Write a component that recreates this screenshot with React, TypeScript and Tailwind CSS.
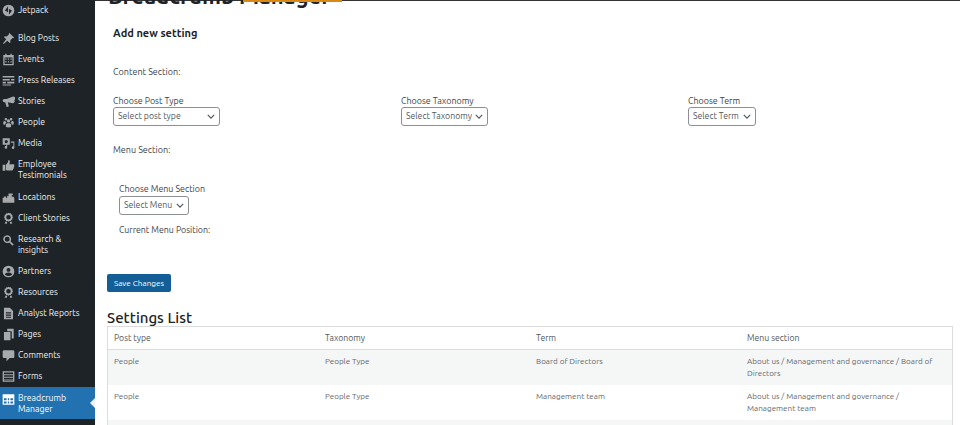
import type { ReactNode } from "react";

const FONT = "font-['Ubuntu','Noto_Sans','Open_Sans',sans-serif]";

function Ico({ children }: { children: ReactNode }) {
  return (
    <svg viewBox="0 0 20 20" className="h-[13px] w-[13px] shrink-0 fill-current">
      {children}
    </svg>
  );
}

const awardPath = (
  <path
    fillRule="evenodd"
    d="M10 1l1.600 1.100 1.900-.2.800 1.700 1.700.9-.2 1.900L17 8l-1.200 1.500.2 1.900-1.700.9-.8 1.700-1.900-.2L10 15l-1.600-1.100-1.900.2-.8-1.700-1.700-.9.2-1.900L3 8l1.200-1.500-.2-1.900 1.700-.9.8-1.700 1.900.2L10 1Zm0 3.500a3.500 3.500 0 1 0 0 7 3.500 3.500 0 0 0 0-7ZM5.500 14.500l2.500.8L7 19l-1.300-1.500-1.700.5 1.500-3.500Zm9 0L16 18l-1.700-.5L13 19l-1-3.700 2.500-.8Z"
  />
);

const icons: Record<string, ReactNode> = {
  jetpack: (
    <path
      fillRule="evenodd"
      d="M10 1a9 9 0 1 0 0 18 9 9 0 0 0 0-18ZM9.300 3.500v9L4.600 10l4.700-6.500Zm1.400 13v-9l4.700 2.500-4.700 6.500Z"
    />
  ),
  pin: <path d="M11.500 1.500 18.500 8.500l-1.200 1.200-1-.5-3.600 3.600.4 3-1.300 1.300-3.500-3.500L2.500 18.500l-1-1 4.900-6.300-3.400-3.400L4.300 6.500l3 .4 3.600-3.600-.5-1 1.100-.8Z" />,
  calendar: (
    <path
      fillRule="evenodd"
      d="M5 1h2v2h6V1h2v2h3v16H2V3h3V1ZM4 7v10h12V7H4Zm1 1.500h2v2H5v-2Zm4 0h2v2H9v-2Zm4 0h2v2h-2v-2Zm-8 4h2v2H5v-2Zm4 0h2v2H9v-2Zm4 0h2v2h-2v-2Z"
    />
  ),
  press: <path d="M1 3h18v2.500H1V3Zm0 4.500h11V10H1V7.500Zm13 0h5V10h-5V7.500ZM1 12h5v2.500H1V12Zm7 0h11v2.500H8V12Zm-7 4h13v1.500H1V16Z" />,
  megaphone: <path d="M17 2.500a3 3 0 0 1 2 5.500 3 3 0 0 1-3 4.500L9 11l1.500 6.500-3.500 1L5 11H3.500a2.500 2.500 0 0 1 0-5H7l9-3.500h1Z" />,
  people: (
    <path d="M6 3a2 2 0 1 1 0 4 2 2 0 0 1 0-4Zm8 0a2 2 0 1 1 0 4 2 2 0 0 1 0-4Zm-4 2a2.500 2.500 0 1 1 0 5 2.500 2.500 0 0 1 0-5ZM2 9c0-1 1.500-1.500 3-1.500.3 1.200 1 2.200 2 3-1.200.6-2 1.500-2 3l-3-.5V9Zm16 0v4l-3 .5c0-1.500-.8-2.400-2-3 1-.8 1.700-1.800 2-3 1.500 0 3 .5 3 1.500ZM6 13.500c0-1.500 1.500-2.500 4-2.500s4 1 4 2.500V17c-2.500 1-5.500 1-8 0v-3.500Z" />
  ),
  media: (
    <path
      fillRule="evenodd"
      d="M1 2h11v10H8v4a2 2 0 1 1-1.500-2V12H1V2Zm5.500 2.500a2.500 2.500 0 1 0 0 5 2.500 2.500 0 0 0 0-5ZM13.500 7H19v9.500a2 2 0 1 1-1.500-2V9h-4V7Z"
    />
  ),
  thumb: <path d="M1 9h4v9H1V9Zm5 0 3-3.500L10 1.500c1.500 0 2.500 1.200 2 3.500l-.7 3H18c1.200 0 1.500 1.500.5 2.500.8.800.5 2-.5 2.500.5 1 0 2-1 2.500.3 1-.3 2-1.500 2H9c-1.500 0-3-.5-3-1.500V9Z" />,
  location: <path d="M1 10.500h2V8.500h3v2h2V7l2 1.500V4h5.500c1 0 1.500 1 1 2L15 6.500V9h3l1 2v7H1v-7.500Z" />,
  award: awardPath,
  search: (
    <path
      fillRule="evenodd"
      d="M8 2a6 6 0 0 1 5 9.300l5 5L16.300 18l-5-5A6 6 0 1 1 8 2Zm0 2.200a3.800 3.800 0 1 0 0 7.600 3.800 3.800 0 0 0 0-7.600Z"
    />
  ),
  partner: (
    <path
      fillRule="evenodd"
      d="M10 1a9 9 0 1 1 0 18 9 9 0 0 1 0-18Zm0 3.500a3 3 0 1 0 0 6 3 3 0 0 0 0-6ZM4.500 14.500c1.300 1.500 3.300 2.300 5.500 2.300s4.200-.8 5.500-2.300c-.5-1.800-2.500-3-5.500-3s-5 1.200-5.500 3Z"
    />
  ),
  analyst: (
    <path
      fillRule="evenodd"
      d="M3 1h9l5 5v13H3V1Zm3 7v2h8V8H6Zm0 3.500v2h8v-2H6Zm0 3.500v1.500h8V15H6Z"
    />
  ),
  pages: <path d="M8 1h10v15h-3V5H8V1ZM3 6h10v13H3V6Z" />,
  comment: <path d="M3 2h14c1 0 2 1 2 2v8c0 1-1 2-2 2h-5l-5 5v-5H3c-1 0-2-1-2-2V4c0-1 1-2 2-2Z" />,
  forms: (
    <path
      fillRule="evenodd"
      d="M1 2h18v16H1V2Zm2 2v2.500h14V4H3Zm0 4v2.500h14V8H3Zm0 4v2.500h14V12H3Zm0 3.800v.7h14v-.7H3Z"
    />
  ),
  table: (
    <path
      fillRule="evenodd"
      d="M1 2h18v16H1V2Zm2 6v3h4V8H3Zm6 0v3h2V8H9Zm4 0v3h4V8h-4Zm-10 5v3h4v-3H3Zm6 0v3h2v-3H9Zm4 0v3h4v-3h-4Z"
    />
  ),
};

type MenuEntry = { label: string; icon: string; tall?: string };

const menu: MenuEntry[] = [
  { label: "Blog Posts", icon: "pin" },
  { label: "Events", icon: "calendar" },
  { label: "Press Releases", icon: "press" },
  { label: "Stories", icon: "megaphone" },
  { label: "People", icon: "people" },
  { label: "Media", icon: "media" },
  { label: "Employee Testimonials", icon: "thumb", tall: "h-[33px]" },
  { label: "Locations", icon: "location" },
  { label: "Client Stories", icon: "award" },
  { label: "Research & insights", icon: "search", tall: "h-[32px]" },
  { label: "Partners", icon: "partner" },
  { label: "Resources", icon: "award" },
  { label: "Analyst Reports", icon: "analyst" },
  { label: "Pages", icon: "pages" },
  { label: "Comments", icon: "comment" },
  { label: "Forms", icon: "forms" },
];

function MenuItem({ entry }: { entry: MenuEntry }) {
  return (
    <div
      className={
        entry.tall
          ? `flex gap-[3px] pl-[2px] pt-[5px] text-[#f0f0f1] ${entry.tall}`
          : "flex h-[21px] items-center gap-[3px] pl-[2px] text-[#f0f0f1]"
      }
    >
      <span className="text-[#a7aaad]">
        <Ico>{icons[entry.icon]}</Ico>
      </span>
      <span className="w-[70px] text-[8.7px] leading-[11px]">{entry.label}</span>
    </div>
  );
}

function Sidebar() {
  return (
    <aside className="flex h-[425px] w-[95px] shrink-0 flex-col overflow-hidden bg-[#1d2327]">
      <div className="flex h-[21px] items-center gap-[3px] pl-[2px] text-[#f0f0f1]">
        <span className="text-[#a7aaad]">
          <Ico>{icons.jetpack}</Ico>
        </span>
        <span className="text-[8.7px]">Jetpack</span>
      </div>
      <div className="h-[7px]" />
      {menu.map((entry) => (
        <MenuItem key={entry.label} entry={entry} />
      ))}
      <div className="relative flex h-[32px] gap-[3px] bg-[#2271b1] pl-[2px] pt-[6px] text-white">
        <Ico>{icons.table}</Ico>
        <span className="w-[70px] text-[8.7px] leading-[11px]">Breadcrumb Manager</span>
        <span className="absolute right-0 top-[11px] h-0 w-0 border-y-[5px] border-r-[5px] border-y-transparent border-r-[#f0f0f1]" />
      </div>
    </aside>
  );
}

function Field({ label, placeholder, width, boxClass }: { label: string; placeholder: string; width: string; boxClass?: string }) {
  return (
    <div className="flex flex-col">
      <span className="text-[8.9px] leading-[12px] text-[#3c434a]">{label}</span>
      <div className={`flex h-[19px] items-center justify-between rounded-[3px] border border-[#8c8f94] bg-white pl-[4px] pr-[4px] text-[8.7px] text-[#50575e] ${width} ${boxClass ?? ""}`}>
        <span className="whitespace-nowrap">{placeholder}</span>
        <svg viewBox="0 0 10 6" className="h-[5px] w-[8px] shrink-0 fill-none stroke-[#50575e] stroke-[1.500]">
          <path d="M1 1l4 4 4-4" />
        </svg>
      </div>
    </div>
  );
}

const rows = [
  { postType: "People", taxonomy: "People Type", term: "Board of Directors", menu: "About us / Management and governance / Board of Directors", bg: "bg-[#f5f6f6]" },
  { postType: "People", taxonomy: "People Type", term: "Management team", menu: "About us / Management and governance / Management team", bg: "bg-white" },
];

function Cell({ children }: { children: ReactNode }) {
  return <div className="px-[6px]">{children}</div>;
}

function SettingsTable() {
  return (
    <div className="w-[846px] border-x border-t border-[#dcdcde]">
      <div className="grid h-[23px] grid-cols-[211px_211px_211px_1fr] items-center border-b border-[#dcdcde] text-[8.700px] leading-[12px] text-[#50575e]">
        <Cell>Post type</Cell>
        <Cell>Taxonomy</Cell>
        <Cell>Term</Cell>
        <Cell>Menu section</Cell>
      </div>
      {rows.map((row) => (
        <div key={row.term} className={`grid h-[35px] grid-cols-[211px_211px_211px_1fr] pt-[5px] text-[8.100px] leading-[12px] text-[#646970] ${row.bg}`}>
          <Cell>{row.postType}</Cell>
          <Cell>{row.taxonomy}</Cell>
          <Cell>{row.term}</Cell>
          <Cell>{row.menu}</Cell>
        </div>
      ))}
      <div className="h-[5px] bg-[#f5f6f6]" />
    </div>
  );
}

export default function App() {
  return (
    <div className={`flex h-[425px] w-[960px] overflow-hidden bg-white ${FONT}`}>
      <Sidebar />
      <main className="relative min-w-0 flex-1 overflow-hidden">
        <div className="absolute left-[148px] top-0 h-[2px] w-[99px] bg-[#d98a14]" />
        <div className="h-[1px] w-full bg-[#333]" />
        <h1 className="-mt-[20px] h-[26px] pl-[13px] text-[22px] font-semibold leading-[30px] text-[#1d2327]">Breadcrumb Manager</h1>
        <div className="h-[19px]" />
        <div className="pl-[18px]">
          <h2 className="text-[11px] font-bold leading-[14px] text-[#1d2327]">Add new setting</h2>
          <p className="mt-[26px] text-[9px] leading-[12px] text-[#3c434a]">Content Section:</p>
          <div className="mt-[17px] grid grid-cols-[288px_287px_1fr]">
            <Field label="Choose Post Type" placeholder="Select post type" width="w-[107px]" />
            <Field label="Choose Taxonomy" placeholder="Select Taxonomy" width="w-[87px]" />
            <Field label="Choose Term" placeholder="Select Term" width="w-[68px]" />
          </div>
          <p className="mt-[18px] text-[9px] leading-[12px] text-[#3c434a]">Menu Section:</p>
          <div className="mt-[27px] pl-[6px]">
            <Field label="Choose Menu Section" placeholder="Select Menu" width="w-[70px]" boxClass="mt-[1px]" />
            <p className="mt-[9px] text-[8.800px] leading-[12px] text-[#3c434a]">Current Menu Position:</p>
          </div>
        </div>
        <div className="pl-[12px]">
          <button type="button" className="mt-[38px] block h-[18px] w-[64px] rounded-[2px] bg-[#135e96] text-[8.200px] text-white">
            Save Changes
          </button>
          <h2 className="mt-[17px] text-[15px] font-medium leading-[17px] text-[#1d2327]">Settings List</h2>
          <SettingsTable />
        </div>
      </main>
    </div>
  );
}
